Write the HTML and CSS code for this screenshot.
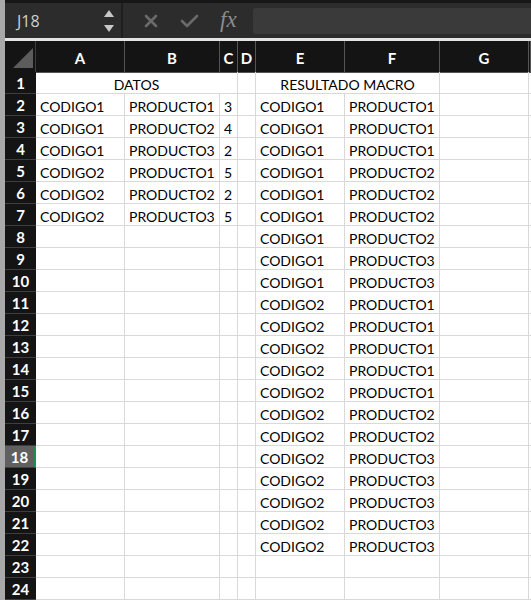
FILE: index.html
```html
<!DOCTYPE html>
<html lang="es">
<head>
<meta charset="utf-8">
<title>Hoja</title>
<link rel="stylesheet" href="styles.css">
</head>
<body>
<div class="app">
  <div class="edge"></div>
  <div class="main">
    <div class="fbar">
      <div class="namebox">
        <span class="ref">J18</span>
        <svg class="spin" width="12" height="24" viewBox="0 0 12 24"><path d="M6 1 L11 8 L1 8 Z" fill="#c8c8c8"/><path d="M1 16 L11 16 L6 23 Z" fill="#c8c8c8"/></svg>
      </div>
      <div class="fbtns">
        <svg class="ico" width="14" height="14" viewBox="0 0 14 14"><path d="M2 2 L12 12 M12 2 L2 12" stroke="#6a6a6a" stroke-width="2.6" stroke-linecap="round"/></svg>
        <svg class="ico" width="19" height="14" viewBox="0 0 19 14"><path d="M2 7 L7 12 L17 2" stroke="#6a6a6a" stroke-width="2.6" fill="none" stroke-linecap="round" stroke-linejoin="round"/></svg>
        <span class="fx">fx</span>
      </div>
      <div class="finput"></div>
    </div>
    <div class="sheet">
      <div class="row hdr">
        <div class="corner"><svg width="31" height="31" viewBox="0 0 31 31"><path d="M8 27 L28 27 L28 7 Z" fill="#5c5c5c"/></svg></div>
        <div class="ch">A</div><div class="ch">B</div><div class="ch">C</div><div class="ch">D</div><div class="ch">E</div><div class="ch">F</div><div class="ch">G</div><div class="ch"></div>
      </div>
      <div class="row"><div class="rh">1</div><div class="c s3 ctr">DATOS</div><div class="c"></div><div class="c s2 ctr">RESULTADO MACRO</div><div class="c"></div><div class="c"></div></div>
      <div class="row"><div class="rh">2</div><div class="c">CODIGO1</div><div class="c">PRODUCTO1</div><div class="c">3</div><div class="c"></div><div class="c">CODIGO1</div><div class="c">PRODUCTO1</div><div class="c"></div><div class="c"></div></div>
      <div class="row"><div class="rh">3</div><div class="c">CODIGO1</div><div class="c">PRODUCTO2</div><div class="c">4</div><div class="c"></div><div class="c">CODIGO1</div><div class="c">PRODUCTO1</div><div class="c"></div><div class="c"></div></div>
      <div class="row"><div class="rh">4</div><div class="c">CODIGO1</div><div class="c">PRODUCTO3</div><div class="c">2</div><div class="c"></div><div class="c">CODIGO1</div><div class="c">PRODUCTO1</div><div class="c"></div><div class="c"></div></div>
      <div class="row"><div class="rh">5</div><div class="c">CODIGO2</div><div class="c">PRODUCTO1</div><div class="c">5</div><div class="c"></div><div class="c">CODIGO1</div><div class="c">PRODUCTO2</div><div class="c"></div><div class="c"></div></div>
      <div class="row"><div class="rh">6</div><div class="c">CODIGO2</div><div class="c">PRODUCTO2</div><div class="c">2</div><div class="c"></div><div class="c">CODIGO1</div><div class="c">PRODUCTO2</div><div class="c"></div><div class="c"></div></div>
      <div class="row"><div class="rh">7</div><div class="c">CODIGO2</div><div class="c">PRODUCTO3</div><div class="c">5</div><div class="c"></div><div class="c">CODIGO1</div><div class="c">PRODUCTO2</div><div class="c"></div><div class="c"></div></div>
      <div class="row"><div class="rh">8</div><div class="c"></div><div class="c"></div><div class="c"></div><div class="c"></div><div class="c">CODIGO1</div><div class="c">PRODUCTO2</div><div class="c"></div><div class="c"></div></div>
      <div class="row"><div class="rh">9</div><div class="c"></div><div class="c"></div><div class="c"></div><div class="c"></div><div class="c">CODIGO1</div><div class="c">PRODUCTO3</div><div class="c"></div><div class="c"></div></div>
      <div class="row"><div class="rh">10</div><div class="c"></div><div class="c"></div><div class="c"></div><div class="c"></div><div class="c">CODIGO1</div><div class="c">PRODUCTO3</div><div class="c"></div><div class="c"></div></div>
      <div class="row"><div class="rh">11</div><div class="c"></div><div class="c"></div><div class="c"></div><div class="c"></div><div class="c">CODIGO2</div><div class="c">PRODUCTO1</div><div class="c"></div><div class="c"></div></div>
      <div class="row"><div class="rh">12</div><div class="c"></div><div class="c"></div><div class="c"></div><div class="c"></div><div class="c">CODIGO2</div><div class="c">PRODUCTO1</div><div class="c"></div><div class="c"></div></div>
      <div class="row"><div class="rh">13</div><div class="c"></div><div class="c"></div><div class="c"></div><div class="c"></div><div class="c">CODIGO2</div><div class="c">PRODUCTO1</div><div class="c"></div><div class="c"></div></div>
      <div class="row"><div class="rh">14</div><div class="c"></div><div class="c"></div><div class="c"></div><div class="c"></div><div class="c">CODIGO2</div><div class="c">PRODUCTO1</div><div class="c"></div><div class="c"></div></div>
      <div class="row"><div class="rh">15</div><div class="c"></div><div class="c"></div><div class="c"></div><div class="c"></div><div class="c">CODIGO2</div><div class="c">PRODUCTO1</div><div class="c"></div><div class="c"></div></div>
      <div class="row"><div class="rh">16</div><div class="c"></div><div class="c"></div><div class="c"></div><div class="c"></div><div class="c">CODIGO2</div><div class="c">PRODUCTO2</div><div class="c"></div><div class="c"></div></div>
      <div class="row"><div class="rh">17</div><div class="c"></div><div class="c"></div><div class="c"></div><div class="c"></div><div class="c">CODIGO2</div><div class="c">PRODUCTO2</div><div class="c"></div><div class="c"></div></div>
      <div class="row"><div class="rh sel">18</div><div class="c"></div><div class="c"></div><div class="c"></div><div class="c"></div><div class="c">CODIGO2</div><div class="c">PRODUCTO3</div><div class="c"></div><div class="c"></div></div>
      <div class="row"><div class="rh">19</div><div class="c"></div><div class="c"></div><div class="c"></div><div class="c"></div><div class="c">CODIGO2</div><div class="c">PRODUCTO3</div><div class="c"></div><div class="c"></div></div>
      <div class="row"><div class="rh">20</div><div class="c"></div><div class="c"></div><div class="c"></div><div class="c"></div><div class="c">CODIGO2</div><div class="c">PRODUCTO3</div><div class="c"></div><div class="c"></div></div>
      <div class="row"><div class="rh">21</div><div class="c"></div><div class="c"></div><div class="c"></div><div class="c"></div><div class="c">CODIGO2</div><div class="c">PRODUCTO3</div><div class="c"></div><div class="c"></div></div>
      <div class="row"><div class="rh">22</div><div class="c"></div><div class="c"></div><div class="c"></div><div class="c"></div><div class="c">CODIGO2</div><div class="c">PRODUCTO3</div><div class="c"></div><div class="c"></div></div>
      <div class="row"><div class="rh">23</div><div class="c"></div><div class="c"></div><div class="c"></div><div class="c"></div><div class="c"></div><div class="c"></div><div class="c"></div><div class="c"></div></div>
      <div class="row"><div class="rh">24</div><div class="c"></div><div class="c"></div><div class="c"></div><div class="c"></div><div class="c"></div><div class="c"></div><div class="c"></div><div class="c"></div></div>
    </div>
  </div>
</div>
</body>
</html>
```
FILE: styles.css
```css
html, body {
  margin: 0;
  padding: 0;
  background: #ffffff;
  overflow: hidden;
}
body {
  width: 531px;
  height: 600px;
  font-family: "Lato", "Liberation Sans", sans-serif;
}
.app {
  display: flex;
  height: 600px;
}
.edge {
  width: 5px;
  flex: none;
  background: #a9a9a9;
}
.main {
  flex: 1;
  display: flex;
  flex-direction: column;
  min-width: 0;
}
.fbar {
  box-sizing: border-box;
  height: 41px;
  border-top: 3px solid #171717;
  border-bottom: 3px solid #e4e4e4;
  background: #2c2c2c;
  display: flex;
  align-items: center;
}
.namebox {
  width: 118px;
  height: 100%;
  box-sizing: border-box;
  border-right: 2px solid #1f1f1f;
  display: flex;
  align-items: center;
  justify-content: space-between;
  padding: 0 6px 0 12px;
}
.ref {
  color: #cfcfcf;
  font-size: 16px;
  font-family: "Open Sans", "Liberation Sans", sans-serif;
}
.fbtns {
  width: 130px;
  display: flex;
  align-items: center;
}
.fbtns .ico:first-child { margin-left: 21px; }
.fbtns .ico:nth-child(2) { margin-left: 22px; }
.fx {
  margin-left: 21px;
  color: #8c8c8c;
  font-family: "Liberation Serif", serif;
  font-style: italic;
  font-size: 23px;
  line-height: 1;
  margin-top: -3px;
}
.finput {
  flex: 1;
  height: 26px;
  background: #3a3a3a;
  border-radius: 3px 0 0 3px;
}
.sheet {
  display: flex;
  flex-direction: column;
}
.row {
  display: grid;
  grid-template-columns: 31px 89px 95px 18px 18px 89px 95px 89px 1fr;
  height: 22px;
}
.row.hdr {
  height: 31px;
  background: #141414;
}
.corner {
  border-right: 1px solid #3c3c3c;
  border-bottom: 1px solid #3c3c3c;
  box-sizing: border-box;
}
.corner svg { display: block; }
.ch {
  box-sizing: border-box;
  border-right: 1px solid #555555;
  border-bottom: 1px solid #555555;
  color: #ffffff;
  font-size: 15px;
  font-weight: 700;
  display: flex;
  align-items: center;
  justify-content: center;
  padding-top: 2px;
}
.rh {
  background: #141414;
  box-sizing: border-box;
  border-bottom: 1px solid #3e3e3e;
  color: #ffffff;
  font-size: 15px;
  font-weight: 700;
  display: flex;
  align-items: center;
  justify-content: center;
  padding-top: 1px;
}
.rh.sel {
  background: #606060;
  border-right: 2px solid #1e8c4e;
}
.c {
  box-sizing: border-box;
  border-right: 1px solid #d9d9d9;
  border-bottom: 1px solid #d9d9d9;
  color: #000000;
  font-size: 14px;
  padding: 3px 0 0 4px;
  white-space: nowrap;
  overflow: hidden;
  line-height: 19px;
}
.s3 { grid-column: span 3; }
.s2 { grid-column: span 2; }
.ctr { text-align: center; padding-left: 0; }
```
